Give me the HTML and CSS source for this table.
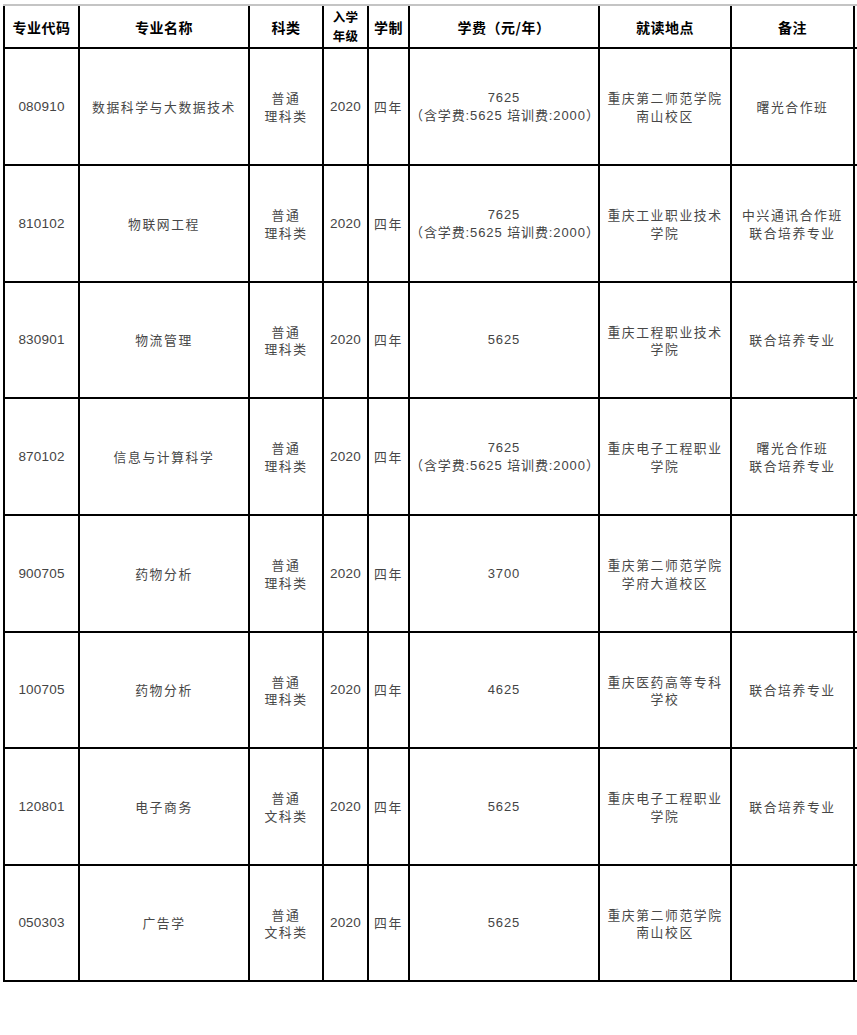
FILE: index.html
```html
<!DOCTYPE html>
<html lang="zh-CN">
<head>
<meta charset="utf-8">
<title>专业招生表</title>
<link rel="stylesheet" href="styles.css">
</head>
<body>
<div class="page">
  <div class="sheet">
    <div class="cell head">专业代码</div>
    <div class="cell head">专业名称</div>
    <div class="cell head">科类</div>
    <div class="cell head two">入学<br>年级</div>
    <div class="cell head">学制</div>
    <div class="cell head">学费（元/年）</div>
    <div class="cell head">就读地点</div>
    <div class="cell head">备注</div>
    <div class="cell head"></div>

    <div class="cell num">080910</div>
    <div class="cell zh">数据科学与大数据技术</div>
    <div class="cell zh">普通<br>理科类</div>
    <div class="cell num">2020</div>
    <div class="cell zh">四年</div>
    <div class="cell fee">7625<br>（含学费:5625 培训费:2000）</div>
    <div class="cell zh">重庆第二师范学院<br>南山校区</div>
    <div class="cell zh">曙光合作班</div>
    <div class="cell"></div>

    <div class="cell num">810102</div>
    <div class="cell zh">物联网工程</div>
    <div class="cell zh">普通<br>理科类</div>
    <div class="cell num">2020</div>
    <div class="cell zh">四年</div>
    <div class="cell fee">7625<br>（含学费:5625 培训费:2000）</div>
    <div class="cell zh">重庆工业职业技术<br>学院</div>
    <div class="cell zh">中兴通讯合作班<br>联合培养专业</div>
    <div class="cell"></div>

    <div class="cell num">830901</div>
    <div class="cell zh">物流管理</div>
    <div class="cell zh">普通<br>理科类</div>
    <div class="cell num">2020</div>
    <div class="cell zh">四年</div>
    <div class="cell fee">5625</div>
    <div class="cell zh">重庆工程职业技术<br>学院</div>
    <div class="cell zh">联合培养专业</div>
    <div class="cell"></div>

    <div class="cell num">870102</div>
    <div class="cell zh">信息与计算科学</div>
    <div class="cell zh">普通<br>理科类</div>
    <div class="cell num">2020</div>
    <div class="cell zh">四年</div>
    <div class="cell fee">7625<br>（含学费:5625 培训费:2000）</div>
    <div class="cell zh">重庆电子工程职业<br>学院</div>
    <div class="cell zh">曙光合作班<br>联合培养专业</div>
    <div class="cell"></div>

    <div class="cell num">900705</div>
    <div class="cell zh">药物分析</div>
    <div class="cell zh">普通<br>理科类</div>
    <div class="cell num">2020</div>
    <div class="cell zh">四年</div>
    <div class="cell fee">3700</div>
    <div class="cell zh">重庆第二师范学院<br>学府大道校区</div>
    <div class="cell zh"></div>
    <div class="cell"></div>

    <div class="cell num">100705</div>
    <div class="cell zh">药物分析</div>
    <div class="cell zh">普通<br>理科类</div>
    <div class="cell num">2020</div>
    <div class="cell zh">四年</div>
    <div class="cell fee">4625</div>
    <div class="cell zh">重庆医药高等专科<br>学校</div>
    <div class="cell zh">联合培养专业</div>
    <div class="cell"></div>

    <div class="cell num">120801</div>
    <div class="cell zh">电子商务</div>
    <div class="cell zh">普通<br>文科类</div>
    <div class="cell num">2020</div>
    <div class="cell zh">四年</div>
    <div class="cell fee">5625</div>
    <div class="cell zh">重庆电子工程职业<br>学院</div>
    <div class="cell zh">联合培养专业</div>
    <div class="cell"></div>

    <div class="cell num">050303</div>
    <div class="cell zh">广告学</div>
    <div class="cell zh">普通<br>文科类</div>
    <div class="cell num">2020</div>
    <div class="cell zh">四年</div>
    <div class="cell fee">5625</div>
    <div class="cell zh">重庆第二师范学院<br>南山校区</div>
    <div class="cell zh"></div>
    <div class="cell"></div>
  </div>
</div>
</body>
</html>
```

FILE: styles.css
```css
html, body {
  margin: 0;
  padding: 0;
  background: #fff;
}

.page {
  width: 857px;
  height: 1035px;
  overflow: hidden;
  padding-top: 4px;
  padding-left: 3px;
  box-sizing: border-box;
}

.sheet {
  display: grid;
  grid-template-columns: 73px 168px 72px 43px 39px 188px 130px 121px 60px;
  grid-template-rows: 41px 115px 115px 114px 115px 115px 114px 115px 114px;
  gap: 2px;
  width: max-content;
  background: #000;
  border-top: 2px solid #c4c4c4;
  padding: 0 0 2px 2px;
  font-family: "Liberation Sans", "Noto Sans CJK SC", sans-serif;
}

.cell {
  background: #fff;
  display: flex;
  align-items: center;
  justify-content: center;
  text-align: center;
  color: #444;
  font-size: 13.5px;
  line-height: 17.5px;
}

.head {
  color: #000;
  font-weight: 700;
  font-size: 14px;
  line-height: 16px;
  font-family: "Noto Sans CJK SC", sans-serif;
  letter-spacing: 0.5px;
}

.two {
  font-size: 12.5px;
  line-height: 18.2px;
  letter-spacing: 0.3px;
}

.zh {
  font-family: "Noto Sans CJK SC", sans-serif;
  letter-spacing: 1.6px;
  font-size: 12.8px;
  color: #474747;
}

.num {
  letter-spacing: 0.2px;
}

.fee {
  font-size: 13px;
  letter-spacing: 0.9px;
}
```
